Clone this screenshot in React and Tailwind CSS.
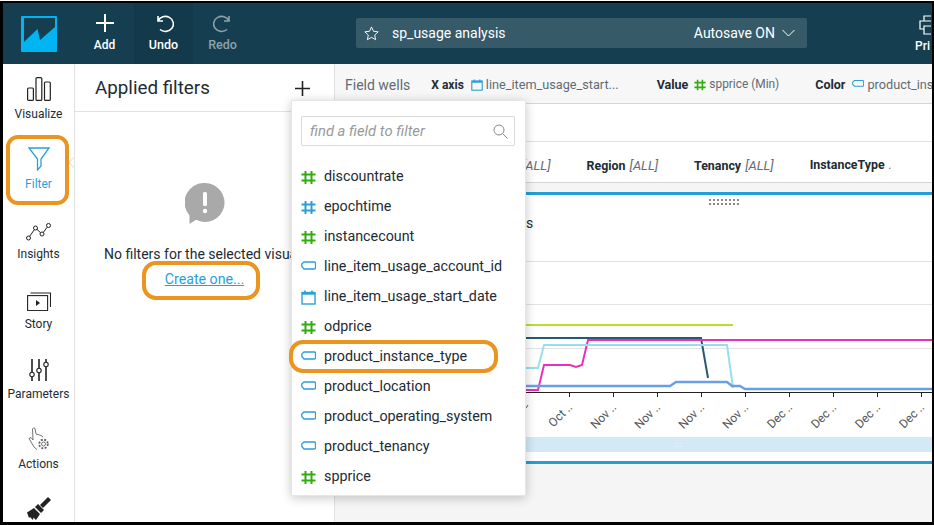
import React from "react";

const font = { fontFamily: '"Roboto","Noto Sans",sans-serif' };

function Hash({ color = "#2fae0b", size = 15 }) {
  return (
    <svg width={size} height={size} viewBox="0 0 15 15" fill="none" stroke={color} strokeWidth="2">
      <path d="M4.5 1v13M10.5 1v13M0.5 4.5h14M0.5 10.5h14" />
    </svg>
  );
}
function Tag({ size = 15 }) {
  return (
    <svg width={size} height={size} viewBox="0 0 15 15" fill="none" stroke="#2ba0d8" strokeWidth="1.3">
      <path d="M3 2h10.500q1 0 1 1v5q0 1-1 1H3L0.800 6.500V4z" />
    </svg>
  );
}
function Cal({ size = 15 }) {
  return (
    <svg width={size} height={size} viewBox="0 0 15 15" fill="none" stroke="#2ba0d8" strokeWidth="1.4">
      <rect x="1" y="2.5" width="13" height="11.5" />
      <path d="M1 3.5h13" strokeWidth="2.4" />
      <path d="M4 0.5v3M11 0.5v3" strokeWidth="1.6" />
    </svg>
  );
}

const fields = [
  ["discountrate", "g"],
  ["epochtime", "b"],
  ["instancecount", "g"],
  ["line_item_usage_account_id", "t"],
  ["line_item_usage_start_date", "c"],
  ["odprice", "g"],
  ["product_instance_type", "t"],
  ["product_location", "t"],
  ["product_operating_system", "t"],
  ["product_tenancy", "t"],
  ["spprice", "g"],
];

function FieldIcon({ k }) {
  if (k === "g") return <Hash />;
  if (k === "b") return <Hash color="#2ba0d8" />;
  if (k === "t") return <Tag />;
  return <Cal />;
}

function RailItem({ icon, label, active }) {
  return (
    <div className={"h-[70px] flex flex-col items-center shrink-0 " + (active ? "text-[#2ba0d8]" : "text-[#222b33]")}>
      <div className="h-[37px] flex items-end justify-center pb-[1px]">{icon}</div>
      <div className="mt-[4px] text-[12px] leading-[16px]">{label}</div>
    </div>
  );
}

const ticks = [569, 613, 657, 701, 745, 789, 833, 877, 921];
const tickLabels = ["Oct ..", "Nov ..", "Nov ..", "Nov ..", "Nov ..", "Dec ..", "Dec ..", "Dec ..", "Dec .."];

function Chart() {
  return (
    <svg width="597" height="242" viewBox="335 195 597 242" className="block" fill="none">
      <g fill="#8a8a8a">
        {[709, 713, 717, 721, 725, 729, 733, 737].map((x) => (
          <g key={x}>
            <rect x={x} y="199" width="2" height="2" />
            <rect x={x} y="203" width="2" height="2" />
          </g>
        ))}
      </g>
      <path d="M335 261.500H932M335 304.500H932M335 348.500H932" stroke="#e2e2e2" strokeWidth="1" />
      <path d="M335 325H733" stroke="#b9de2f" strokeWidth="2" />
      <path d="M335 338H701L708 378" stroke="#245a72" strokeWidth="2" />
      <path d="M335 390H538L544 365H570L576 367L582 365L588 340H932" stroke="#ec2fb7" strokeWidth="2" />
      <path d="M335 368H538L544 345H727L733 388" stroke="#9adcf2" strokeWidth="2" />
      <path d="M335 386H670L676 382H727L732 386H740L745 389H932" stroke="#6a9fe6" strokeWidth="2.400" />
      <path d="M335 392.500H932" stroke="#222" strokeWidth="1" />
      {ticks.map((x) => (
        <path key={x} d={`M${x + 0.5} 392V397`} stroke="#222" strokeWidth="1" />
      ))}
      <path d="M526 408l2-3" stroke="#555" strokeWidth="1" />
      {ticks.map((x, i) => (
        <text
          key={x}
          x={x + 4}
          y={408}
          textAnchor="end"
          fontSize="12"
          fill="#555"
          transform={`rotate(-45 ${x + 4} 408)`}
          style={font}
        >
          {tickLabels[i]}
        </text>
      ))}
    </svg>
  );
}

export default function App() {
  return (
    <div className="w-[934px] h-[525px] bg-white pt-[1px]">
      <div
        className="relative h-[524px] overflow-hidden flex flex-col bg-white border-black border-t-[2px] border-l-[3px] border-r-[2px] border-b-[3px]"
        style={font}
      >
        {/* Top bar */}
        <header className="h-[61px] shrink-0 bg-[#153f51] flex items-stretch text-white">
          <div className="w-[72px] shrink-0 flex items-center pl-[18px]">
            <svg width="36" height="36" viewBox="0 0 36 36">
              <rect width="36" height="36" rx="1" fill="#00b5f1" />
              <path d="M3 2H34V11L19 24L16.500 13L3 26Z" fill="#153f51" />
            </svg>
          </div>
          <div className="w-[59px] shrink-0 flex flex-col items-center pt-[10px]">
            <svg width="20" height="20" viewBox="0 0 20 20" stroke="white" strokeWidth="2">
              <path d="M10 1v18M1 10h18" />
            </svg>
            <div className="text-[12px] font-medium leading-[16px] mt-[4px]">Add</div>
          </div>
          <div className="w-[59px] shrink-0 bg-[#123a4b] flex flex-col items-center pt-[10px]">
            <svg width="20" height="20" viewBox="0 0 20 20" fill="none" stroke="white" strokeWidth="1.600">
              <path d="M4 3v5h5M4 8a8 7.500 0 1 1 2 8.500" />
            </svg>
            <div className="text-[12.5px] font-medium leading-[16px] mt-[4px]">Undo</div>
          </div>
          <div className="w-[59px] shrink-0 flex flex-col items-center pt-[10px] text-[#8fa1aa]">
            <svg width="20" height="20" viewBox="0 0 20 20" fill="none" stroke="#8fa1aa" strokeWidth="1.600">
              <path d="M16 3v5h-5M16 8a8 7.500 0 1 0-2 8.500" />
            </svg>
            <div className="text-[12.5px] font-medium leading-[16px] mt-[4px]">Redo</div>
          </div>
          <div className="ml-[104px] mt-[15px] w-[451px] h-[30px] shrink-0 bg-[#375a69] rounded-[2px] flex items-center pl-[8px] pr-[12px] text-[14px]">
            <svg width="15" height="15" viewBox="0 0 16 16" fill="none" stroke="white" strokeWidth="1">
              <path d="M8 1l2.100 4.600 5 .6-3.700 3.400 1 5L8 12.100 3.600 14.600l1-5L.9 6.200l5-.6z" />
            </svg>
            <span className="ml-[13px]">sp_usage analysis</span>
            <span className="ml-auto">Autosave ON</span>
            <svg className="ml-[7px]" width="13" height="8" viewBox="0 0 13 8" fill="none" stroke="white" strokeWidth="1">
              <path d="M.5 1l6 6 6-6" />
            </svg>
          </div>
          <div className="ml-[108px] w-[16px] shrink-0 flex flex-col items-start pt-[12px] overflow-hidden">
            <svg className="ml-[4px] shrink-0" width="22" height="20" viewBox="0 0 22 20" fill="none" stroke="white" strokeWidth="1.200">
              <path d="M5 6V1h12v5M5 14H1V6h20v8h-4M5 11h12v8H5z" />
            </svg>
            <div className="text-[12px] font-medium leading-[16px] mt-[3px]">Pri</div>
          </div>
        </header>

        <div className="flex-1 flex min-h-0">
          {/* Rail */}
          <nav className="relative w-[72px] shrink-0 border-r border-[#e1e1e1] flex flex-col overflow-hidden pt-[1px]">
            <RailItem
              label="Visualize"
              icon={
                <svg width="24" height="24" viewBox="0 0 24 24" fill="none" stroke="#222" strokeWidth="1.200">
                  <rect x="0.6" y="11" width="5.800" height="12.400" rx="1" />
                  <rect x="9" y="0.6" width="5.800" height="22.800" rx="1" />
                  <rect x="17.500" y="5" width="5.800" height="18.400" rx="1" />
                </svg>
              }
            />
            <RailItem
              active
              label="Filter"
              icon={
                <svg width="22" height="24" viewBox="0 0 22 24" fill="none" stroke="#2ba0d8" strokeWidth="1.300">
                  <path d="M1 1h20l-8 11v7l-3.500 4V12z" />
                </svg>
              }
            />
            <RailItem
              label="Insights"
              icon={
                <svg width="25" height="18" viewBox="0 0 25 18" fill="none" stroke="#222" strokeWidth="1">
                  <circle cx="2.500" cy="15" r="2" />
                  <circle cx="9.500" cy="5" r="2" />
                  <circle cx="16" cy="11" r="2" />
                  <circle cx="22.500" cy="2.500" r="2" />
                  <path d="M3.700 13.300L8.300 6.700M11 6.300L14.500 9.700M17.300 9.400L21.200 4.200" />
                </svg>
              }
            />
            <RailItem
              label="Story"
              icon={
                <svg width="24" height="19" viewBox="0 0 24 19" fill="none" stroke="#222" strokeWidth="1.100">
                  <rect x="0.6" y="3.600" width="20" height="15" />
                  <path d="M3.500 1h20v14" />
                  <path d="M9 8l4 3-4 3z" fill="#222" stroke="none" />
                </svg>
              }
            />
            <RailItem
              label="Parameters"
              icon={
                <svg width="20" height="22" viewBox="0 0 20 22" fill="none" stroke="#222" strokeWidth="1.600">
                  <path d="M3 0v13M3 18v4M10 0v9M10 14v8M17 0v3M17 8v14" />
                  <circle cx="3" cy="15.500" r="2.200" strokeWidth="1.100" />
                  <circle cx="10" cy="11.500" r="2.200" strokeWidth="1.100" />
                  <circle cx="17" cy="5.500" r="2.200" strokeWidth="1.100" />
                </svg>
              }
            />
            <RailItem
              label="Actions"
              icon={
                <svg width="22" height="24" viewBox="0 0 22 24" fill="none" stroke="#666" strokeWidth="0.900">
                  <path d="M5 13L4.500 2Q5.500 0 7 1.500L8 7 13 8.500 15 10M5 13L3 10.500 1 11.500 6 20 9 22.500" />
                  <circle cx="15.500" cy="17" r="4.300" strokeWidth="1.800" strokeDasharray="2 1.400" />
                  <circle cx="15.500" cy="17" r="2" />
                </svg>
              }
            />
            <div className="flex justify-center pt-[12px]">
              <svg width="24" height="24" viewBox="0 0 24 24" fill="#222">
                <path d="M21 0L24 3L16 11L13 8Z" />
                <path d="M11 7L17 13L14 16L8 10Z" />
                <path d="M7 11L13 17L9 23L6.500 20.500L6 23L3 20L2 21L0 15.500Z" />
              </svg>
            </div>
            <div className="absolute right-[-5px] top-[94px] w-[9px] h-[9px] rotate-45 bg-white border-l border-b border-[#e1e1e1]" />
          </nav>

          {/* Filters panel */}
          <aside className="w-[260px] shrink-0 border-r border-[#e1e1e1] flex flex-col">
            <div className="h-[48px] shrink-0 border-b border-[#e1e1e1] flex items-center pl-[20px] pr-[24px] pt-[2px]">
              <div className="text-[18.800px] text-[#222b33]">Applied filters</div>
              <svg className="ml-auto" width="15" height="15" viewBox="0 0 15 15" stroke="#222" strokeWidth="1.600">
                <path d="M7.500 0v15M0 7.500h15" />
              </svg>
            </div>
            <div className="flex flex-col items-center">
              <svg className="mt-[71px]" width="40" height="41" viewBox="0 0 40 41">
                <path d="M20 0a19.500 19.500 0 1 1-9 36.800L4.500 41 4.500 32.500A19.500 19.500 0 0 1 20 0z" fill="#a9a9a9" />
                <rect x="18" y="9" width="4" height="14" rx="1.500" fill="#fff" />
                <circle cx="20" cy="28" r="2.200" fill="#fff" />
              </svg>
              <div className="mt-[20px] pl-[29px] w-full whitespace-nowrap text-[14px] leading-[20px] text-[#222b33]">
                No filters for the selected visual
              </div>
              <div className="mt-[5px] text-[14.200px] leading-[20px] text-[#2ba0d8] underline">Create one...</div>
            </div>
          </aside>

          {/* Main */}
          <main className="flex-1 min-w-0 flex flex-col bg-[#f5f5f5] overflow-hidden">
            <div className="h-[40px] shrink-0 bg-[#f7f7f7] border-b border-[#d5d5d5] flex items-center pl-[10px] pt-[3px] whitespace-nowrap">
              <span className="text-[14px] text-[#5f6b75]">Field wells</span>
              <span className="ml-[21px] text-[12px] font-bold text-[#222b33]">X axis</span>
              <span className="ml-[7px]"><Cal size={12} /></span>
              <span className="ml-[3px] text-[12.700px] text-[#5f6b75]">line_item_usage_start...</span>
              <span className="ml-[38px] text-[12.500px] font-bold text-[#222b33]">Value</span>
              <span className="ml-[6px]"><Hash size={12} /></span>
              <span className="ml-[3px] text-[11.900px] text-[#5f6b75]">spprice (Min)</span>
              <span className="ml-[36px] text-[12.500px] font-bold text-[#222b33]">Color</span>
              <span className="ml-[7px]"><Tag size={12} /></span>
              <span className="ml-[3px] text-[12.700px] text-[#5f6b75]">product_instance_type</span>
            </div>
            <div className="h-[38px] shrink-0 bg-white border-b border-[#e1e1e1]" />
            <div className="h-[41px] shrink-0 bg-white border-b border-[#d5d5d5] flex items-center gap-[36px] pl-[187px] pt-[7px] whitespace-nowrap text-[12.400px]">
              <span className="italic text-[13px] text-[#5f6b75]">[ALL]</span>
              <span><b className="font-bold text-[#222b33]">Region</b> <i className="ml-[1px] text-[13px] text-[#5f6b75]">[ALL]</i></span>
              <span><b className="font-bold text-[#222b33]">Tenancy</b> <i className="ml-[1px] text-[13px] text-[#5f6b75]">[ALL]</i></span>
              <span><b className="font-bold text-[#222b33]">InstanceType</b> <i className="ml-[1px] text-[#5f6b75]">.</i></span>
            </div>
            <div className="mt-[9px] h-[272px] shrink-0 bg-white border-y-[3px] border-[#229fd6] relative">
              <Chart />
              <div className="h-[15px] bg-[#d3e9f5] flex items-center justify-center pl-[90px] text-[#fff] text-[8px] leading-none tracking-[1px]">
                :::
              </div>
              <div className="absolute left-[191px] top-[19px] text-[14px] leading-[18px] text-[#222b33]">s</div>
            </div>
          </main>
        </div>

        {/* Field picker */}
        <div className="absolute left-[288px] top-[97px] w-[235px] h-[396px] bg-white border border-[#e6e6e6] shadow-[0_2px_10px_rgba(0,0,0,0.22)] pl-[9px] pr-[10px] pt-[15px]">
          <div className="h-[30px] border border-[#d9d9d9] rounded-[2px] flex items-center pl-[8px] pr-[6px]">
            <span className="text-[14.800px] italic text-[#9a9a9a]">find a field to filter</span>
            <svg className="ml-auto" width="15" height="15" viewBox="0 0 15 15" fill="none" stroke="#8a8a8a" strokeWidth="1">
              <circle cx="6" cy="6" r="5" />
              <path d="M9.700 9.700l4.800 4.800" />
            </svg>
          </div>
          <ul className="mt-[16px]">
            {fields.map(([name, k]) => (
              <li key={name} className="h-[30px] flex items-center text-[14.300px] text-[#222b33]">
                <span className="flex w-[23px] shrink-0"><FieldIcon k={k} /></span>
                {name}
              </li>
            ))}
          </ul>
        </div>

        {/* Orange annotations */}
        <div className="absolute left-[3px] top-[132px] w-[63px] h-[70px] border-[4px] border-[#e9951f] rounded-[12px]" />
        <div className="absolute left-[139px] top-[258px] w-[118px] h-[39px] border-[4px] border-[#e9951f] rounded-[14px]" />
        <div className="absolute left-[286px] top-[337px] w-[209px] h-[33px] border-[4px] border-[#e9951f] rounded-[14px]" />
      </div>
    </div>
  );
}
